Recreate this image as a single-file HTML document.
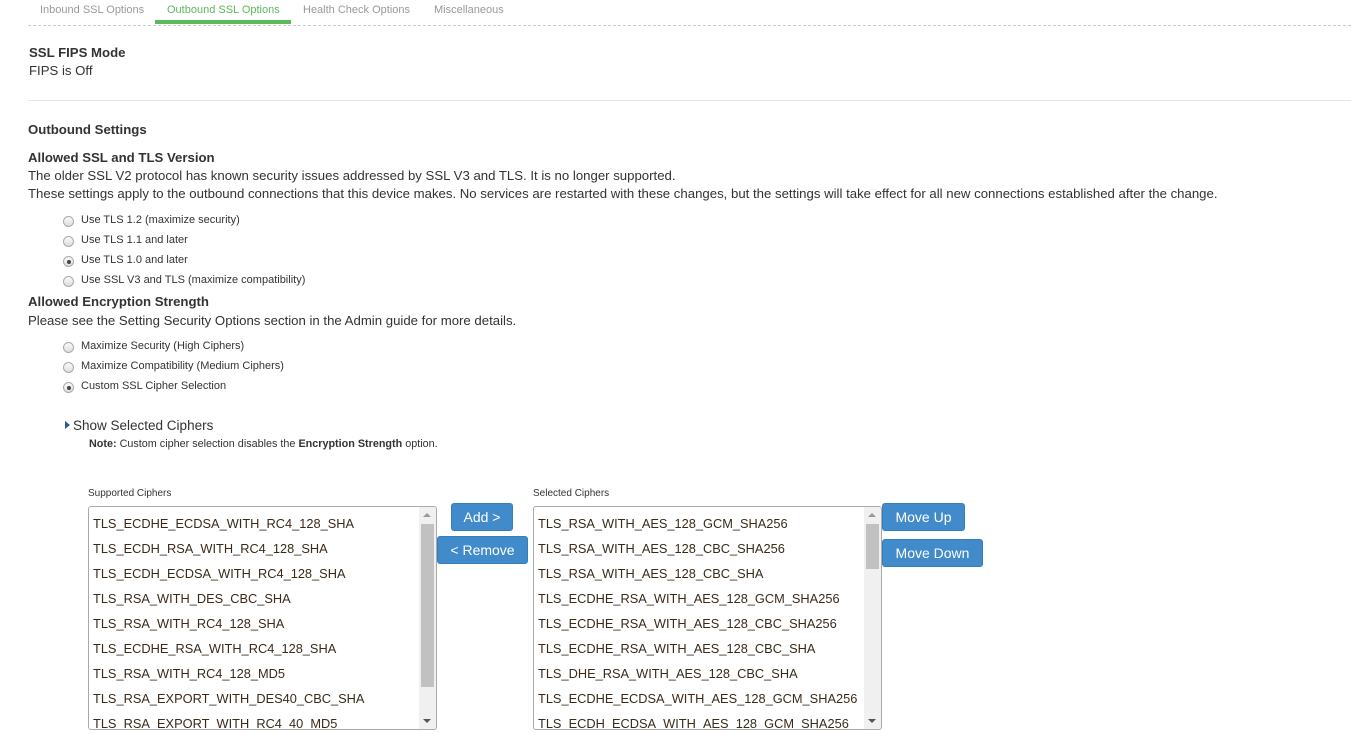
<!DOCTYPE html>
<html><head><meta charset="utf-8"><style>
*{margin:0;padding:0;box-sizing:border-box}
body{width:1351px;height:734px;overflow:hidden;background:#fff;font-family:"Liberation Sans",Arial,sans-serif;color:#333;position:relative}
.a{position:absolute;white-space:nowrap}
.tab{font-size:11px;color:#999;top:4px}
.t13{font-size:13.2px}
.b{font-weight:bold}
.r{font-size:11px;color:#333}
.rad{position:absolute;width:11px;height:11px;border-radius:50%;border:1px solid #aaa;background:linear-gradient(#fafafa,#ddd)}
.rad.on::after{content:"";position:absolute;left:2.5px;top:2.5px;width:4px;height:4px;border-radius:50%;background:#444}
.box{position:absolute;border:1px solid #aaa;border-radius:3px;background:#fff;overflow:hidden}
.box div{font-size:12.8px;color:#3a2a1a;height:25px;line-height:25px;padding-left:4px;white-space:nowrap}
.sb{position:absolute;right:0;top:0;width:17px;height:100%;background:#f0f0f0}
.th{position:absolute;left:2px;width:13px;background:#c1c1c1}
.ar{position:absolute;left:4px;width:0;height:0;border-left:4px solid transparent;border-right:4px solid transparent}
.btn{position:absolute;background:#428bca;border:1px solid #357ebd;border-radius:3px;color:#fff;font-size:14px;text-align:center;line-height:26px}
</style></head><body>
<div class="a tab" style="left:40px">Inbound SSL Options</div>
<div class="a tab" style="left:167px;color:#5cb85c">Outbound SSL Options</div>
<div class="a tab" style="left:303px">Health Check Options</div>
<div class="a tab" style="left:434px">Miscellaneous</div>
<div class="a" style="left:155px;top:20px;width:136px;height:4px;background:#5cb85c"></div>
<div class="a" style="left:28px;top:25px;width:1323px;border-top:1px dashed #ccc"></div>

<div class="a t13 b" style="left:29px;top:45px">SSL FIPS Mode</div>
<div class="a t13" style="left:29px;top:63px">FIPS is Off</div>
<div class="a" style="left:28px;top:100px;width:1323px;border-top:1px solid #e5e5e5"></div>

<div class="a t13 b" style="left:28px;top:122px">Outbound Settings</div>
<div class="a t13 b" style="left:28px;top:150px">Allowed SSL and TLS Version</div>
<div class="a t13" style="left:28px;top:168px">The older SSL V2 protocol has known security issues addressed by SSL V3 and TLS. It is no longer supported.</div>
<div class="a t13" style="left:28px;top:186px">These settings apply to the outbound connections that this device makes. No services are restarted with these changes, but the settings will take effect for all new connections established after the change.</div>

<div class="rad" style="left:63px;top:216px"></div><div class="a r" style="left:81px;top:214px">Use TLS 1.2 (maximize security)</div>
<div class="rad" style="left:63px;top:236px"></div><div class="a r" style="left:81px;top:234px">Use TLS 1.1 and later</div>
<div class="rad on" style="left:63px;top:256px"></div><div class="a r" style="left:81px;top:254px">Use TLS 1.0 and later</div>
<div class="rad" style="left:63px;top:276px"></div><div class="a r" style="left:81px;top:274px">Use SSL V3 and TLS (maximize compatibility)</div>

<div class="a t13 b" style="left:28px;top:294px">Allowed Encryption Strength</div>
<div class="a t13" style="left:28px;top:313px">Please see the Setting Security Options section in the Admin guide for more details.</div>

<div class="rad" style="left:63px;top:342px"></div><div class="a r" style="left:81px;top:340px">Maximize Security (High Ciphers)</div>
<div class="rad" style="left:63px;top:362px"></div><div class="a r" style="left:81px;top:360px">Maximize Compatibility (Medium Ciphers)</div>
<div class="rad on" style="left:63px;top:382px"></div><div class="a r" style="left:81px;top:380px">Custom SSL Cipher Selection</div>

<div class="a" style="left:65px;top:421px;width:0;height:0;border-top:4px solid transparent;border-bottom:4px solid transparent;border-left:5px solid #2a5d8a"></div>
<div class="a t13" style="left:73px;top:418px;font-size:13.5px">Show Selected Ciphers</div>
<div class="a" style="left:89px;top:438px;font-size:10.8px"><b>Note:</b> Custom cipher selection disables the <b>Encryption Strength</b> option.</div>

<div class="a" style="left:88px;top:488px;font-size:10px">Supported Ciphers</div>
<div class="a" style="left:533px;top:488px;font-size:10px">Selected Ciphers</div>

<div class="box" style="left:88px;top:506px;width:349px;height:224px;padding-top:4px">
<div>TLS_ECDHE_ECDSA_WITH_RC4_128_SHA</div><div>TLS_ECDH_RSA_WITH_RC4_128_SHA</div><div>TLS_ECDH_ECDSA_WITH_RC4_128_SHA</div><div>TLS_RSA_WITH_DES_CBC_SHA</div><div>TLS_RSA_WITH_RC4_128_SHA</div><div>TLS_ECDHE_RSA_WITH_RC4_128_SHA</div><div>TLS_RSA_WITH_RC4_128_MD5</div><div>TLS_RSA_EXPORT_WITH_DES40_CBC_SHA</div><div>TLS_RSA_EXPORT_WITH_RC4_40_MD5</div>
<span class="sb"><span class="ar" style="top:6px;border-bottom:4px solid #999"></span><span class="th" style="top:17px;height:163px"></span><span class="ar" style="bottom:6px;border-top:4px solid #555"></span></span>
</div>
<div class="box" style="left:533px;top:506px;width:349px;height:224px;padding-top:4px">
<div>TLS_RSA_WITH_AES_128_GCM_SHA256</div><div>TLS_RSA_WITH_AES_128_CBC_SHA256</div><div>TLS_RSA_WITH_AES_128_CBC_SHA</div><div>TLS_ECDHE_RSA_WITH_AES_128_GCM_SHA256</div><div>TLS_ECDHE_RSA_WITH_AES_128_CBC_SHA256</div><div>TLS_ECDHE_RSA_WITH_AES_128_CBC_SHA</div><div>TLS_DHE_RSA_WITH_AES_128_CBC_SHA</div><div>TLS_ECDHE_ECDSA_WITH_AES_128_GCM_SHA256</div><div>TLS_ECDH_ECDSA_WITH_AES_128_GCM_SHA256</div>
<span class="sb"><span class="ar" style="top:6px;border-bottom:4px solid #999"></span><span class="th" style="top:17px;height:45px"></span><span class="ar" style="bottom:6px;border-top:4px solid #555"></span></span>
</div>

<div class="btn" style="left:451px;top:503px;width:62px;height:28px">Add &gt;</div>
<div class="btn" style="left:437px;top:536px;width:91px;height:28px">&lt; Remove</div>
<div class="btn" style="left:882px;top:503px;width:83px;height:28px">Move Up</div>
<div class="btn" style="left:882px;top:539px;width:101px;height:28px">Move Down</div>
</body></html>
